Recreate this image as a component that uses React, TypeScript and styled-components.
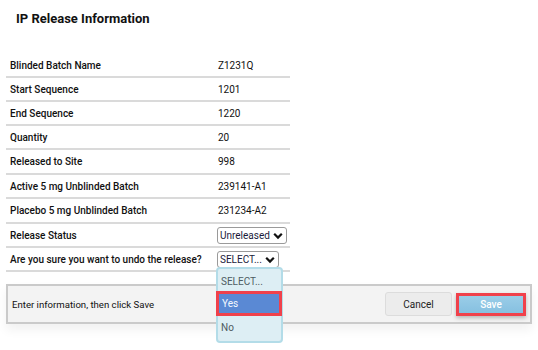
import React from "react";
import styled, { createGlobalStyle } from "styled-components";

const GlobalStyle = createGlobalStyle`
  body {
    margin: 0;
    background: #fff;
    font-family: Roboto, "Liberation Sans", Arial, sans-serif;
    color: #111;
  }
`;

type Row = {
  label: string;
  value?: string;
  select?: "status" | "confirm";
  tall?: boolean;
};

const rows: Row[] = [
  { label: "Blinded Batch Name", value: "Z1231Q" },
  { label: "Start Sequence", value: "1201" },
  { label: "End Sequence", value: "1220" },
  { label: "Quantity", value: "20" },
  { label: "Released to Site", value: "998", tall: true },
  { label: "Active 5 mg Unblinded Batch", value: "239141-A1" },
  { label: "Placebo 5 mg Unblinded Batch", value: "231234-A2", tall: true },
  { label: "Release Status", select: "status" },
  { label: "Are you sure you want to undo the release?", select: "confirm" },
];

const Chevron = () => (
  <svg width="10" height="8" viewBox="0 0 10 8">
    <path d="M1.2 1.8 L5 5.6 L8.8 1.8" fill="none" stroke="#111" strokeWidth="2.2" />
  </svg>
);

const App = () => {
  return (
    <>
      <GlobalStyle />
      <Page>
        <Title>IP Release Information</Title>
        <Table>
          {rows.map((row) => (
            <TableRow key={row.label} $tall={row.tall}>
              <Label>{row.label}</Label>
              {row.value && <Value>{row.value}</Value>}
              {row.select === "status" && (
                <SelectWrap>
                  <SelectBox>
                    <span>Unreleased</span>
                    <Chevron />
                  </SelectBox>
                </SelectWrap>
              )}
              {row.select === "confirm" && (
                <SelectWrap>
                  <SelectBox>
                    <span>SELECT...</span>
                    <Chevron />
                  </SelectBox>
                  <ListBox>
                    <Option>SELECT...</Option>
                    <Option $active>Yes</Option>
                    <Option>No</Option>
                  </ListBox>
                </SelectWrap>
              )}
            </TableRow>
          ))}
        </Table>
        <Footer>
          <Hint>Enter information, then click Save</Hint>
          <Buttons>
            <CancelButton>Cancel</CancelButton>
            <SaveButton>Save</SaveButton>
          </Buttons>
        </Footer>
      </Page>
    </>
  );
};

export default App;

const Page = styled.div`
  width: 538px;
  height: 350px;
  padding: 0 6px;
  box-sizing: border-box;
  overflow: hidden;
`;

const Title = styled.h1`
  margin: 0;
  padding: 10px 0 0 10px;
  font-size: 13px;
  font-weight: 700;
  line-height: 17px;
  color: #111;
`;

const Table = styled.div`
  width: 284px;
  margin-top: 27px;
`;

const TableRow = styled.div<{ $tall?: boolean }>`
  display: grid;
  grid-template-columns: 211px 1fr;
  align-items: center;
  height: ${(p) => (p.$tall ? "23px" : "22px")};
  border-bottom: 2px solid #dadada;
  font-size: 10px;
  white-space: nowrap;
`;

const Label = styled.div`
  padding-left: 4px;
  font-weight: 500;
  color: #111;
`;

const Value = styled.div`
  padding-left: 1px;
  color: #111;
`;

const SelectWrap = styled.div`
  position: relative;
  height: 18px;
`;

const SelectBox = styled.div`
  display: inline-flex;
  align-items: center;
  gap: 3px;
  height: 17px;
  padding: 0 3px 0 2px;
  border: 1px solid #9a9a9a;
  border-radius: 3px;
  background: #fff;
  font-size: 10px;
  color: #1a1a3a;
  box-sizing: border-box;
  margin-top: 1px;
`;

const ListBox = styled.div`
  position: absolute;
  top: 17px;
  left: -1px;
  width: 67px;
  height: 76px;
  box-sizing: border-box;
  padding-top: 2px;
  background: #ddeef4;
  border: 2px solid #b3dce8;
  border-radius: 4px;
  z-index: 2;
`;

const Option = styled.div<{ $active?: boolean }>`
  display: flex;
  align-items: center;
  height: ${(p) => (p.$active ? "25px" : "20px")};
  margin: ${(p) => (p.$active ? "0 -1px 1px -2px" : "0")};
  padding-left: 3px;
  box-sizing: border-box;
  font-size: 10px;
  color: ${(p) => (p.$active ? "#f4f8ff" : "#4e5c62")};
  background: ${(p) => (p.$active ? "#5a89d4" : "transparent")};
  border: ${(p) => (p.$active ? "3px solid #f0414b" : "none")};
`;

const Footer = styled.div`
  display: flex;
  align-items: center;
  justify-content: space-between;
  height: 40px;
  margin-top: 12px;
  box-sizing: border-box;
  border: 2px solid #cacaca;
  background: #f3f3f3;
  box-shadow: 0 6px 10px rgba(0, 0, 0, 0.06);
  padding: 0 4px;
`;

const Hint = styled.div`
  font-size: 9.6px;
  color: #111;
`;

const Buttons = styled.div`
  display: flex;
  gap: 4px;
  align-items: center;
`;

const CancelButton = styled.div`
  display: flex;
  align-items: center;
  justify-content: center;
  width: 67px;
  height: 24px;
  box-sizing: border-box;
  border: 1px solid #dcdcdc;
  border-radius: 3px;
  background: #ececec;
  font-size: 10px;
  color: #222;
`;

const SaveButton = styled.div`
  display: flex;
  align-items: center;
  justify-content: center;
  width: 70px;
  height: 23px;
  box-sizing: border-box;
  border: 3px solid #f0414b;
  background: linear-gradient(#9acde8, #86c0e0);
  box-shadow: 0 2px 4px rgba(0, 0, 0, 0.25);
  font-size: 10px;
  color: #fff;
  font-weight: 500;
`;
